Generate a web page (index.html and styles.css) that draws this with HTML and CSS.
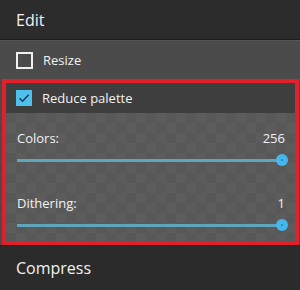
FILE: index.html
```html
<!DOCTYPE html>
<html>
<head>
<meta charset="utf-8">
<link rel="stylesheet" href="styles.css">
</head>
<body>
<div class="panel">
  <div class="header">Edit</div>
  <div class="row resize">
    <span class="box"></span>
    <span class="label">Resize</span>
  </div>
  <div class="group">
    <div class="row reduce">
      <span class="box checked">
        <svg width="16" height="16" viewBox="0 0 16 16"><path d="M3.5 8.2 L6.6 11.2 L12.6 4.8" fill="none" stroke="#1f3d55" stroke-width="1.6"/></svg>
      </span>
      <span class="label">Reduce palette</span>
    </div>
    <div class="sliders">
      <div class="field">
        <div class="field-head"><span>Colors:</span><span>256</span></div>
        <div class="track"><span class="thumb"></span></div>
      </div>
      <div class="field">
        <div class="field-head"><span>Dithering:</span><span>1</span></div>
        <div class="track"><span class="thumb"></span></div>
      </div>
    </div>
  </div>
  <div class="footer">Compress</div>
</div>
</body>
</html>
```
FILE: styles.css
```css
html, body {
  margin: 0;
  padding: 0;
  width: 300px;
  height: 290px;
  overflow: hidden;
  background: #4a4a4a;
  font-family: "Open Sans", "Noto Sans", sans-serif;
  color: #f2f2f2;
}
.panel {
  display: flex;
  flex-direction: column;
  height: 290px;
}
.header {
  height: 40px;
  box-sizing: border-box;
  background: #2c2c2c;
  border-bottom: 1px solid #1c1c1c;
  padding-left: 16px;
  display: flex;
  align-items: center;
  font-size: 16px;
}
.row {
  display: flex;
  align-items: center;
  gap: 10px;
  padding-left: 16px;
  font-size: 13px;
}
.resize {
  height: 38px;
  background: #4b4b4b;
  border-top: 1px solid #555;
}
.box {
  width: 17px;
  height: 17px;
  box-sizing: border-box;
  border: 2px solid #f0f0f0;
  flex: none;
}
.box.checked {
  width: 16px;
  height: 16px;
  border: none;
  background: #4fc0ee;
  display: flex;
}
.group {
  margin: 0 1px 0 2px;
  border: 4px solid #e3202a;
  display: flex;
  flex-direction: column;
  flex: none;
}
.reduce {
  height: 30px;
  background: #3e3e3e;
  padding-left: 10px;
}
.sliders {
  height: 128px;
  box-sizing: border-box;
  padding: 16px 13px 0 11px;
  background-color: #585858;
  background-image:
    linear-gradient(45deg, #5c5c5c 25%, transparent 25%, transparent 75%, #5c5c5c 75%),
    linear-gradient(45deg, #5c5c5c 25%, transparent 25%, transparent 75%, #5c5c5c 75%);
  background-size: 20px 20px;
  background-position: 0 0, 10px 10px;
  display: flex;
  flex-direction: column;
  gap: 32px;
}
.field-head {
  display: flex;
  justify-content: space-between;
  font-size: 13px;
  margin-right: -3px;
}
.track {
  position: relative;
  margin-top: 12px;
  height: 3px;
  background: #5ea6bd;
}
.thumb {
  position: absolute;
  right: -6px;
  top: -5px;
  width: 12px;
  height: 12px;
  border-radius: 50%;
  background: #46b6ee;
}
.thumb::after {
  content: "";
  position: absolute;
  left: 5px;
  top: 5px;
  width: 2px;
  height: 2px;
  border-radius: 50%;
  background: #2a7fb0;
}
.footer {
  flex: 1;
  background: #2b2b2b;
  border-top: 1px solid #1f1f1f;
  padding-left: 16px;
  display: flex;
  align-items: center;
  font-size: 16px;
}
```
